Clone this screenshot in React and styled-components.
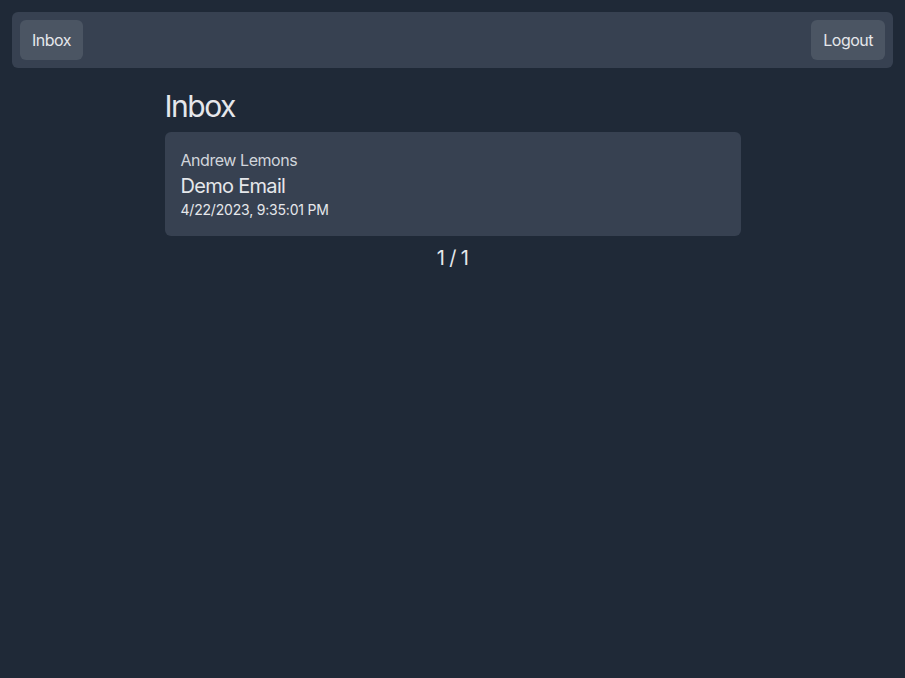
import React from 'react';
import styled, { createGlobalStyle } from 'styled-components';

const GlobalStyle = createGlobalStyle`
  html, body {
    margin: 0;
    padding: 0;
    background: #1f2937;
    min-height: 100%;
  }
  body {
    font-family: Inter, "Noto Sans", sans-serif;
    color: #e5e7eb;
  }
  * {
    box-sizing: border-box;
  }
`;

const Page = styled.div`
  min-height: 678px;
  padding: 12px;
  background: #1f2937;
`;

const NavBar = styled.nav`
  display: flex;
  justify-content: space-between;
  align-items: center;
  padding: 8px;
  background: #374151;
  border-radius: 6px;
`;

const NavButton = styled.button`
  height: 40px;
  padding: 0 12px;
  border: none;
  border-radius: 6px;
  background: #4b5563;
  color: #e5e7eb;
  font-family: inherit;
  font-size: 16px;
  line-height: 24px;
  letter-spacing: -0.5px;
  cursor: pointer;
`;

const Main = styled.main`
  width: 576px;
  margin: 20px auto 0;
`;

const Title = styled.h1`
  margin: 0 0 8px;
  font-size: 30px;
  line-height: 36px;
  font-weight: 400;
  letter-spacing: -1.5px;
  color: #e5e7eb;
`;

const EmailCard = styled.div`
  padding: 16px;
  background: #374151;
  border-radius: 6px;
`;

const Sender = styled.div`
  font-size: 16px;
  line-height: 24px;
  letter-spacing: -0.45px;
  color: #d1d5db;
`;

const Subject = styled.div`
  font-size: 20px;
  line-height: 28px;
  letter-spacing: -0.7px;
  color: #e5e7eb;
`;

const Sent = styled.div`
  font-size: 14px;
  line-height: 20px;
  letter-spacing: -0.2px;
  color: #e5e7eb;
`;

const Pager = styled.div`
  margin-top: 8px;
  text-align: center;
  font-size: 20px;
  line-height: 28px;
  letter-spacing: -0.6px;
  color: #e5e7eb;
`;

const emails = [
  {
    id: 1,
    from: 'Andrew Lemons',
    subject: 'Demo Email',
    date: '4/22/2023, 9:35:01 PM',
  },
];

const App = () => {
  return (
    <>
      <GlobalStyle />
      <Page>
        <NavBar>
          <NavButton>Inbox</NavButton>
          <NavButton>Logout</NavButton>
        </NavBar>
        <Main>
          <Title>Inbox</Title>
          {emails.map((email) => (
            <EmailCard key={email.id}>
              <Sender>{email.from}</Sender>
              <Subject>{email.subject}</Subject>
              <Sent>{email.date}</Sent>
            </EmailCard>
          ))}
          <Pager>1 / 1</Pager>
        </Main>
      </Page>
    </>
  );
};

export default App;
